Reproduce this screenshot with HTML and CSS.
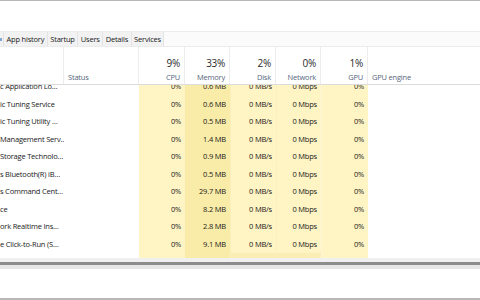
FILE: index.html
```html
<!DOCTYPE html>
<html lang="en">
<head>
    <meta charset="UTF-8">
    <title>Task Manager - Services</title>
    <link rel="stylesheet" href="styles.css">
</head>
<body>
    <div class="window">
        <div class="title-space"></div>
        <div class="tabs">
            <span class="tab-arrow"></span>
            <span class="tab">App history</span>
            <span class="tab">Startup</span>
            <span class="tab">Users</span>
            <span class="tab">Details</span>
            <span class="tab">Services</span>
        </div>
        <div class="table-head">
            <div class="th name"></div>
            <div class="th status"><span class="label">Status</span></div>
            <div class="th num"><span class="pct">9%</span><span class="label">CPU</span></div>
            <div class="th num"><span class="pct">33%</span><span class="label">Memory</span></div>
            <div class="th num"><span class="pct">2%</span><span class="label">Disk</span></div>
            <div class="th num"><span class="pct">0%</span><span class="label">Network</span></div>
            <div class="th num"><span class="pct">1%</span><span class="label">GPU</span></div>
            <div class="th engine"><span class="label">GPU engine</span></div>
        </div>
        <div class="table-body">
            <div class="rows" id="rows"></div>
        </div>
        <div class="splitter"></div>
        <div class="footer"></div>
    </div>

    <script>
        var processes = [
            ["c Application Lo\u2026", "0%", "0.6 MB"],
            ["ic Tuning Service", "0%", "0.6 MB"],
            ["ic Tuning Utility \u2026", "0%", "0.5 MB"],
            ["Management Serv\u2026", "0%", "1.4 MB"],
            ["Storage Technolo\u2026", "0%", "0.9 MB"],
            ["s Bluetooth(R) iB\u2026", "0%", "0.5 MB"],
            ["s Command Cent\u2026", "0%", "29.7 MB"],
            ["ce", "0%", "8.2 MB"],
            ["ork Realtime Ins\u2026", "0%", "2.8 MB"],
            ["e Click-to-Run (S\u2026", "0%", "9.1 MB"],
            ["", "", ""]
        ];

        var rows = document.getElementById("rows");
        processes.forEach(function(p) {
            var empty = p[0] === "";
            var row = document.createElement("div");
            row.className = "row" + (empty ? " row-next" : "");
            row.innerHTML =
                '<div class="cell name">' + p[0] + '</div>' +
                '<div class="cell status"></div>' +
                '<div class="cell num cpu">' + p[1] + '</div>' +
                '<div class="cell num mem">' + p[2] + '</div>' +
                '<div class="cell num disk">' + (empty ? "" : "0 MB/s") + '</div>' +
                '<div class="cell num net">' + (empty ? "" : "0 Mbps") + '</div>' +
                '<div class="cell num gpu">' + (empty ? "" : "0%") + '</div>' +
                '<div class="cell engine"></div>';
            rows.appendChild(row);
        });
    </script>
</body>
</html>
```

FILE: styles.css
```css
body {
    margin: 0;
    background: #ffffff;
    font-family: "Open Sans", "Noto Sans", sans-serif;
    color: #1a1a1a;
}
.window {
    width: 480px;
    height: 300px;
    overflow: hidden;
    border-top: 1px solid #b8b8b8;
    box-sizing: border-box;
    display: flex;
    flex-direction: column;
}
.title-space {
    height: 30px;
    flex: none;
}
.tabs {
    height: 14px;
    flex: none;
    display: flex;
    align-items: stretch;
    border-top: 1px solid #ececec;
    border-bottom: 1px solid #ececec;
    background: #fbfbfb;
    font-size: 7.5px;
    letter-spacing: -0.2px;
}
.tab-arrow {
    width: 3px;
    position: relative;
    background: #f2f2f2;
    border-right: 1px solid #e4e4e4;
}
.tab-arrow::after {
    content: "";
    position: absolute;
    left: 0;
    top: 6px;
    width: 2px;
    height: 3px;
    background: #7ea6d6;
}
.tab {
    display: flex;
    align-items: center;
    padding: 0 2.5px;
    background: #f2f2f2;
    border-right: 1px solid #e4e4e4;
    white-space: nowrap;
}
.table-head,
.row {
    display: grid;
    grid-template-columns: 64px 75px 46px 45px 46px 45px 47px 1fr;
}
.table-head {
    height: 37px;
    flex: none;
    border-bottom: 1px solid #dcdcdc;
}
.th {
    display: flex;
    flex-direction: column;
    justify-content: flex-end;
    padding: 0 4px 1px 4px;
    border-right: 1px solid #ececec;
    white-space: nowrap;
}
.th.engine {
    border-right: none;
}
.th.num {
    align-items: flex-end;
}
.pct {
    font-size: 10px;
    line-height: 15px;
    letter-spacing: -0.3px;
    color: #2a2a2a;
}
.label {
    font-size: 7.5px;
    line-height: 12px;
    letter-spacing: -0.2px;
    color: #56667c;
}
.table-body {
    height: 173px;
    flex: none;
    overflow: hidden;
}
.rows {
    margin-top: -7px;
}
.row {
    height: 17.5px;
    font-size: 7.5px;
    line-height: 17.5px;
    letter-spacing: -0.2px;
}
.cell {
    white-space: nowrap;
    overflow: hidden;
    padding: 0 4px;
}
.cell.name {
    padding: 0;
}
.cell.num {
    text-align: right;
}
.cpu,
.disk,
.net,
.gpu {
    background: #fff4c4;
}
.mem {
    background: #f9eca8;
}
.disk,
.net {
    border-left: 1px solid #fbefbb;
}
.gpu {
    border-left: 1px solid #fdf6d8;
}
.row-next .disk,
.row-next .net {
    background: #fbeeb4;
}
.splitter {
    height: 11px;
    flex: none;
    background: linear-gradient(#f0f0f0 0, #f0f0f0 4px, #8c8c8c 4px, #8c8c8c 7px, #e6e6e6 7px);
}
.footer {
    flex: 1;
    border-bottom: 2px solid #b8b8b8;
}
```
